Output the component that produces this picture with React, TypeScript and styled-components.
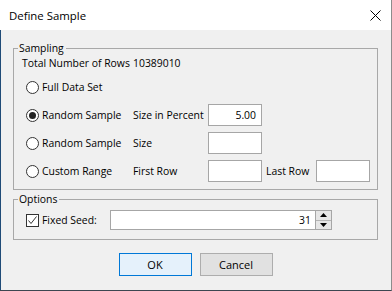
import styled, { createGlobalStyle } from "styled-components";

const Global = createGlobalStyle`
  html, body {
    margin: 0;
    padding: 0;
    background: #f0f0f0;
  }
  * {
    box-sizing: border-box;
  }
`;

const Window = styled.div`
  width: 392px;
  height: 291px;
  display: flex;
  flex-direction: column;
  background: #f0f0f0;
  border-right: 1px solid #8c8c8c;
  border-bottom: 1px solid #3c4650;
  font-family: "Open Sans", "Noto Sans", sans-serif;
  font-size: 10.4px;
  color: #000;
  overflow: hidden;
`;

const TitleBar = styled.div`
  height: 30px;
  flex: none;
  display: flex;
  align-items: center;
  justify-content: space-between;
  padding: 0 10px 0 9px;
  background: #fff;
  font-size: 11.4px;
`;

const Body = styled.div`
  flex: 1;
  display: flex;
  flex-direction: column;
  padding: 0 13px 0 12px;
  border-left: 1px solid #1f4b77;
`;

const Group = styled.div<{ $top: number }>`
  margin-top: ${(p) => p.$top}px;
  border: 1px solid #a8a8a8;
`;

const Legend = styled.div`
  width: fit-content;
  margin: -9px 0 0 4px;
  padding: 0 2px 0 1px;
  line-height: 16px;
  background: #f0f0f0;
`;

const SampleGrid = styled.div`
  display: grid;
  grid-template-columns: 111px 75px 54px 54px 54px;
  grid-template-rows: 15px repeat(4, 22px);
  row-gap: 6px;
  align-items: center;
  margin-top: -1px;
  padding: 0 0 7px 8px;
`;

const Cell = styled.div<{ $pad?: number; $span?: number }>`
  padding-left: ${(p) => p.$pad ?? 0}px;
  grid-column: span ${(p) => p.$span ?? 1};
  white-space: nowrap;
`;

const Choice = styled.label`
  display: flex;
  align-items: center;
  gap: 3px;
  padding-left: 4px;
  white-space: nowrap;
`;

const Radio = styled.span<{ $on?: boolean }>`
  width: 13px;
  height: 13px;
  flex: none;
  border: 1px solid #333;
  border-radius: 50%;
  background: #fff;
  display: flex;
  align-items: center;
  justify-content: center;
  &::after {
    content: "";
    width: 7px;
    height: 7px;
    border-radius: 50%;
    background: ${(p) => (p.$on ? "#222" : "transparent")};
  }
`;

const Field = styled.div<{ $w?: number; $h?: number }>`
  width: ${(p) => p.$w ?? 54}px;
  height: ${(p) => p.$h ?? 22}px;
  border: 1px solid #a6a6a6;
  background: #fff;
  display: flex;
  align-items: center;
  justify-content: flex-end;
  padding-right: 5px;
`;

const OptionsRow = styled.div`
  display: grid;
  grid-template-columns: 88px 222px;
  align-items: center;
  height: 20px;
  margin-top: 3px;
  padding: 0 0 0 8px;
  margin-bottom: 9px;
`;

const SeedBox = styled.div`
  height: 20px;
  display: flex;
  border: 1px solid #a6a6a6;
  background: #fff;
`;

const SeedValue = styled.div`
  flex: 1;
  display: flex;
  align-items: center;
  justify-content: flex-end;
  padding-right: 4px;
  border-right: 1px solid #a6a6a6;
`;

const Spinner = styled.div`
  width: 15px;
  display: flex;
  flex-direction: column;
`;

const SpinButton = styled.div<{ $down?: boolean }>`
  flex: 1;
  display: flex;
  align-items: center;
  justify-content: center;
  background: #e6e6e6;
  border-top: ${(p) => (p.$down ? "1px solid #b4b4b4" : "none")};
`;

const Check = styled.span`
  width: 13px;
  height: 13px;
  flex: none;
  border: 1px solid #333;
  background: #fff;
  display: flex;
  align-items: center;
  justify-content: center;
`;

const Buttons = styled.div`
  display: flex;
  justify-content: center;
  gap: 8px;
  margin-top: 13px;
`;

const Button = styled.div<{ $primary?: boolean }>`
  width: 73px;
  height: 23px;
  display: flex;
  align-items: center;
  justify-content: center;
  font-size: 11px;
  background: ${(p) => (p.$primary ? "#e5f1fb" : "#e1e1e1")};
  border: 1px solid ${(p) => (p.$primary ? "#0078d7" : "#adadad")};
`;

const Arrow = ({ down }: { down?: boolean }) => (
  <svg width="7" height="4" viewBox="0 0 7 4">
    <path d={down ? "M0 0H7L3.5 4Z" : "M0 4H7L3.5 0Z"} fill="#000" />
  </svg>
);

export default function App() {
  return (
    <>
      <Global />
      <Window>
        <TitleBar>
          <span>Define Sample</span>
          <svg width="11" height="11" viewBox="0 0 11 11">
            <path d="M0.5 0.5L10.5 10.5M10.5 0.5L0.5 10.5" stroke="#000" strokeWidth="1" />
          </svg>
        </TitleBar>
        <Body>
          <Group $top={18}>
            <Legend>Sampling</Legend>
            <SampleGrid>
              <Cell>Total Number of Rows</Cell>
              <Cell $span={4}>10389010</Cell>

              <Choice>
                <Radio />
                Full Data Set
              </Choice>
              <Cell $span={4} />

              <Choice>
                <Radio $on />
                Random Sample
              </Choice>
              <Cell>Size in Percent</Cell>
              <Field>5.00</Field>
              <Cell $span={2} />

              <Choice>
                <Radio />
                Random Sample
              </Choice>
              <Cell>Size</Cell>
              <Field />
              <Cell $span={2} />

              <Choice>
                <Radio />
                Custom Range
              </Choice>
              <Cell>First Row</Cell>
              <Field />
              <Cell $pad={4}>Last Row</Cell>
              <Field />
            </SampleGrid>
          </Group>

          <Group $top={9}>
            <Legend>Options</Legend>
            <OptionsRow>
              <Choice>
                <Check>
                  <svg width="11" height="11" viewBox="0 0 11 11">
                    <path d="M1.5 5.5L4 8.5L9.5 1.5" fill="none" stroke="#333" strokeWidth="1" />
                  </svg>
                </Check>
                Fixed Seed:
              </Choice>
              <SeedBox>
                <SeedValue>31</SeedValue>
                <Spinner>
                  <SpinButton>
                    <Arrow />
                  </SpinButton>
                  <SpinButton $down>
                    <Arrow down />
                  </SpinButton>
                </Spinner>
              </SeedBox>
            </OptionsRow>
          </Group>

          <Buttons>
            <Button $primary>OK</Button>
            <Button>Cancel</Button>
          </Buttons>
        </Body>
      </Window>
    </>
  );
}
